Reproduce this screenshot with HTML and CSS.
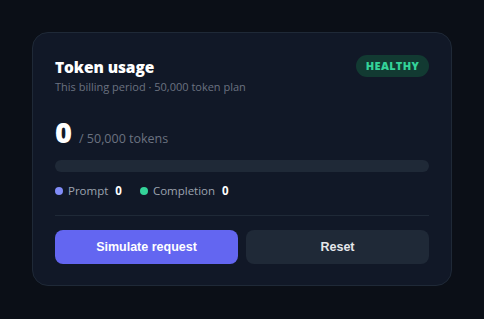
FILE: index.html
```html
<!DOCTYPE html>
<html>
<head>
<meta charset="utf-8">
<link rel="stylesheet" href="styles.css">
</head>
<body>
<div class="card">
  <div class="head">
    <div>
      <div class="title">Token usage</div>
      <div class="sub">This billing period · 50,000 token plan</div>
    </div>
    <span class="badge">HEALTHY</span>
  </div>
  <div class="amount"><span class="big">0</span><span class="of">/ 50,000 tokens</span></div>
  <div class="bar"></div>
  <div class="legend">
    <span class="item"><span class="dot prompt"></span>Prompt<b>0</b></span>
    <span class="item"><span class="dot comp"></span>Completion<b>0</b></span>
  </div>
  <div class="divider"></div>
  <div class="actions">
    <button class="btn primary">Simulate request</button>
    <button class="btn secondary">Reset</button>
  </div>
</div>
</body>
</html>
```
FILE: styles.css
```css
html, body { margin: 0; padding: 0; }
body {
  background: #0b0f17;
  font-family: "Open Sans", sans-serif;
  width: 484px;
  height: 319px;
  padding: 32px;
  box-sizing: border-box;
}
.card {
  width: 420px;
  height: 254px;
  box-sizing: border-box;
  background: #111827;
  border: 1px solid #1f2937;
  border-radius: 16px;
  padding: 22px 22px;
}
.head { display: flex; justify-content: space-between; align-items: flex-start; }
.title { color: #fff; font-size: 15.5px; font-weight: 800; line-height: 22px; margin-top: 1px; letter-spacing: -0.1px; }
.sub { color: #6b7280; font-size: 11px; line-height: 16px; margin-top: 1px; }
.badge {
  background: #123a32;
  color: #34d399;
  font-size: 11px;
  font-weight: 800;
  letter-spacing: 0.3px;
  border-radius: 999px;
  padding: 3px 10px;
  line-height: 16px;
}
.amount { display: flex; align-items: baseline; gap: 7px; margin-top: 20px; }
.big { color: #fff; font-size: 29px; font-weight: 800; line-height: 34px; }
.of { color: #6b7280; font-size: 12.5px; }
.bar { height: 12px; border-radius: 999px; background: #1f2937; margin-top: 11px; }
.legend { display: flex; gap: 18px; margin-top: 10px; font-size: 11.5px; color: #9ca3af; line-height: 18px; }
.item { display: flex; align-items: center; gap: 5px; }
.item b { color: #fff; font-weight: 700; margin-left: 2px; }
.dot { width: 8px; height: 8px; border-radius: 50%; display: inline-block; }
.prompt { background: #818cf8; }
.comp { background: #34d399; }
.divider { height: 1px; background: #1f2937; margin-top: 15px; }
.actions { display: grid; grid-template-columns: 1fr 1fr; gap: 8px; margin-top: 14px; }
.btn {
  height: 34px;
  border: none;
  border-radius: 8px;
  font-family: "Liberation Sans", Arial, sans-serif;
  font-weight: 700;
  font-size: 12.5px;
  color: #f3f4f6;
}
.primary { background: #6366f1; color: #fff; }
.secondary { background: #1f2937; color: #e5e7eb; }
```
